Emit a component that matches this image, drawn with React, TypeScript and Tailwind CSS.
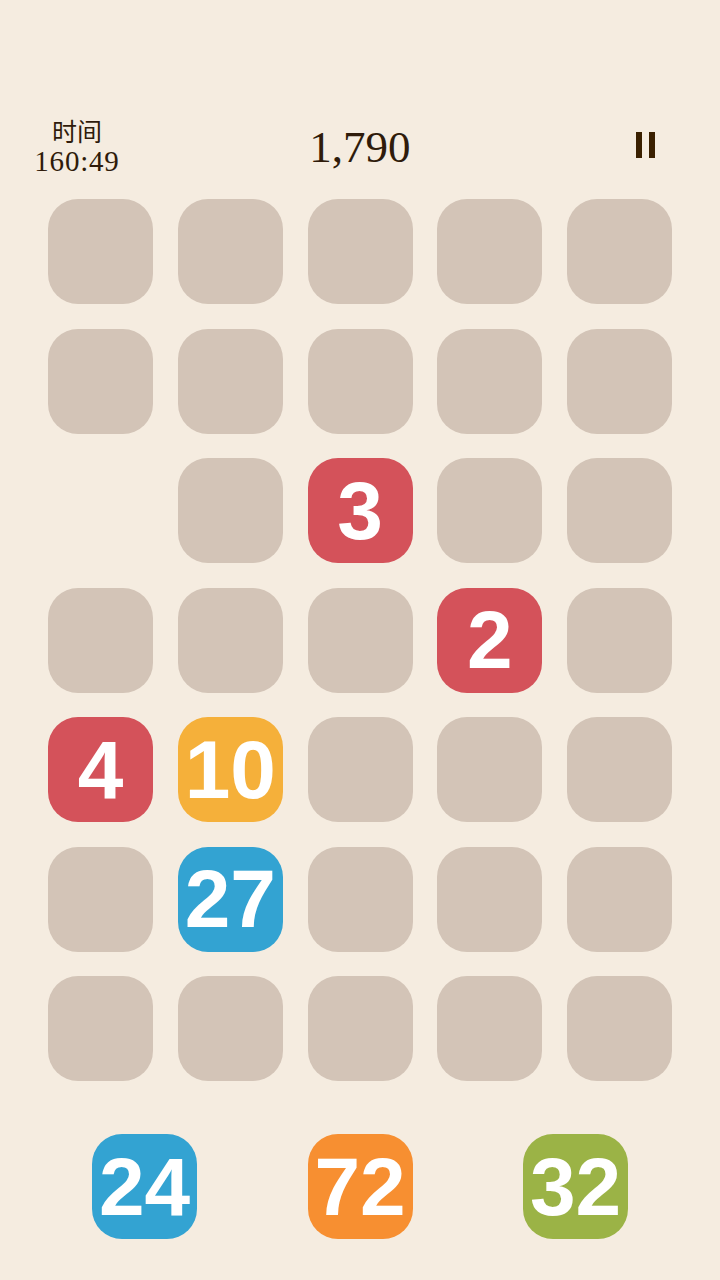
const cells: (null | { v: number; c: string } | "e")[] = [
  "e", "e", "e", "e", "e",
  "e", "e", "e", "e", "e",
  null, "e", { v: 3, c: "bg-[#d4525a]" }, "e", "e",
  "e", "e", "e", { v: 2, c: "bg-[#d4525a]" }, "e",
  { v: 4, c: "bg-[#d4525a]" }, { v: 10, c: "bg-[#f5b03a]" }, "e", "e", "e",
  "e", { v: 27, c: "bg-[#33a3d2]" }, "e", "e", "e",
  "e", "e", "e", "e", "e",
];

const next = [
  { v: 24, c: "bg-[#33a3d2]" },
  { v: 72, c: "bg-[#f78f31]" },
  { v: 32, c: "bg-[#9bb346]" },
];

const Tile = ({ v, c }: { v: number; c: string }) => (
  <div
    className={`w-[105px] h-[105px] rounded-[30px] ${c} flex items-center justify-center text-white font-bold text-[82px] leading-none`}
    style={{ fontFamily: '"Liberation Sans", Arial, sans-serif' }}
  >
    {v}
  </div>
);

export default function App() {
  return (
    <div className="w-[720px] h-[1280px] bg-[#f5ece0] flex flex-col text-[#2f1b0a]">
      <div className="grid grid-cols-3 items-start pt-[117px] px-[32px] h-[199px]">
        <div className="flex flex-col items-start">
          <div className="flex flex-col items-center w-[90px]">
            <span
              className="text-[25px] leading-[27px]"
              style={{ fontFamily: '"Noto Sans CJK SC", sans-serif' }}
            >
              时间
            </span>
            <span
              className="text-[29px] leading-[30px] mt-[2px] tracking-[0.8px]"
              style={{ fontFamily: '"Liberation Serif", serif' }}
            >
              160:49
            </span>
          </div>
        </div>
        <span
          className="text-[45px] leading-none mt-[8px] text-center"
          style={{ fontFamily: '"Liberation Serif", serif' }}
        >
          1,790
        </span>
        <div className="flex justify-end">
          <div className="flex gap-[7px] mt-[15px] mr-[33px]">
            <div className="w-[6px] h-[26px] bg-[#3a2000]" />
            <div className="w-[6px] h-[26px] bg-[#3a2000]" />
          </div>
        </div>
      </div>
      <div className="mx-[48px] w-[624px] grid grid-cols-5 gap-x-[24.75px] gap-y-[24.5px]">
        {cells.map((c, i) =>
          c === null ? (
            <div key={i} className="w-[105px] h-[105px]" />
          ) : c === "e" ? (
            <div key={i} className="w-[105px] h-[105px] rounded-[30px] bg-[#d3c4b7]" />
          ) : (
            <Tile key={i} v={c.v} c={c.c} />
          )
        )}
      </div>
      <div className="flex justify-between px-[92px] mt-[53px]">
        {next.map((n) => (
          <Tile key={n.v} v={n.v} c={n.c} />
        ))}
      </div>
    </div>
  );
}
